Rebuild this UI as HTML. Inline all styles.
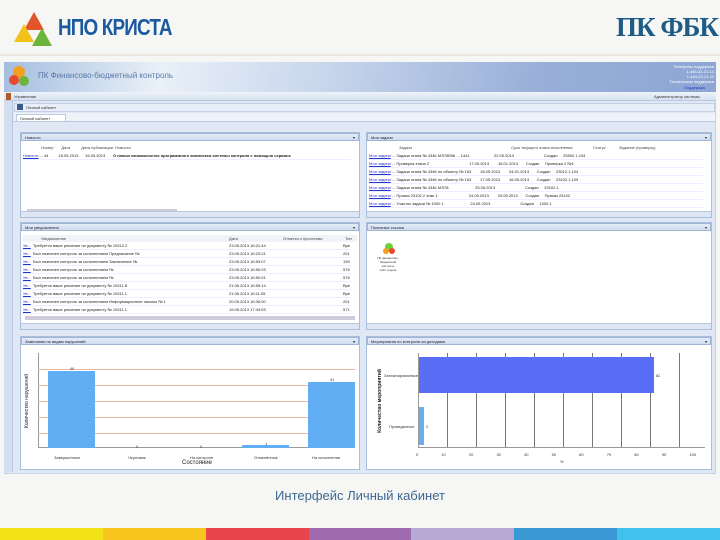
<!DOCTYPE html>
<html><head><meta charset="utf-8"><style>
*{margin:0;padding:0;box-sizing:border-box}
body{width:720px;height:540px;overflow:hidden;background:#f6f6f4;font-family:"Liberation Sans",sans-serif;position:relative}
.a{position:absolute}
.t{font-size:4px;color:#333;white-space:nowrap;overflow:hidden}
.ph{background:linear-gradient(#e4ecf7,#cfdcee);border:1px solid #9fb5d5;height:8px;font-size:4px;color:#223;padding-left:3px;line-height:7px}
.panel{position:absolute;background:#fff;border:1px solid #a9bedd}
.foot{position:absolute;left:0;right:0;bottom:0;height:6px;background:#dde6f2;border-top:1px solid #b7c7de}
.row{position:absolute;left:2px;right:8px;height:8px;font-size:4px;line-height:8px;color:#222;white-space:nowrap;overflow:hidden;border-bottom:1px solid #eef}
.lk{color:#2233cc;text-decoration:underline}
.grid{position:absolute;height:1px;background:#e8b8a0}
</style></head><body>
<!-- logo -->
<svg class="a" style="left:12px;top:10px" width="42" height="40">
<polygon points="22,2 32,20 12,20" fill="#e2552a"/>
<polygon points="12,14 22,32 2,32" fill="#f2c21b"/>
<polygon points="30,18 40,36 20,36" fill="#6cb43c"/>
</svg>
<div class="a" style="left:58px;top:14px;font-size:23px;font-weight:bold;color:#1c5aa0;letter-spacing:-1px;transform:scaleX(0.82);transform-origin:left;font-family:'Liberation Sans',sans-serif">НПО КРИСТА</div>
<div class="a" style="left:616px;top:12px;font-size:27px;font-weight:bold;color:#1e5c86;font-family:'Liberation Serif',serif;letter-spacing:-1px">ПК ФБК</div>
<div class="a" style="left:0;top:54px;width:720px;height:2px;background:#ece8e0"></div>

<!-- app frame -->
<div class="a" style="left:4px;top:62px;width:712px;height:412px;background:#dfe8f4;border:1px solid #c5d3e6"></div>
<div class="a" style="left:4px;top:62px;width:712px;height:30px;background:linear-gradient(100deg,#a4bee0 0%,#e9f0f8 22%,#c8d6ec 45%,#98afd8 75%,#8ea6d4 100%)"></div>
<svg class="a" style="left:8px;top:64px" width="22" height="26"><circle cx="11" cy="8" r="6" fill="#f2a020"/><circle cx="6" cy="16" r="5" fill="#e84a30"/><circle cx="16" cy="17" r="5" fill="#6cb43c"/></svg>
<div class="a" style="left:38px;top:71px;font-size:8px;color:#5b79a8">ПК Финансово-бюджетный контроль</div>
<div class="a t" style="left:664px;top:64px;color:#fff;line-height:5px;width:50px;text-align:right">Телефоны поддержки<br>1-445-22-21-14<br>1-444-22-21-11<br>Техническая поддержка</div>
<div class="a t lk" style="left:684px;top:85px">Поддержка</div>
<div class="a" style="left:4px;top:92px;width:712px;height:9px;background:linear-gradient(#eef3fa,#d6e1f0);border-bottom:1px solid #b9c9df"></div>
<div class="a" style="left:6px;top:93px;width:5px;height:7px;background:#b05a28"></div>
<div class="a t" style="left:14px;top:94px">Управление</div>
<div class="a t" style="left:654px;top:94px">Администратор системы</div>
<div class="a" style="left:4px;top:101px;width:9px;height:371px;background:#d3def0;border-right:1px solid #b9c9df"></div>
<div class="a" style="left:14px;top:103px;width:701px;height:9px;background:#e9eff8;border:1px solid #c3d0e4"></div>
<div class="a" style="left:17px;top:104px;width:6px;height:6px;background:#3a5a8c"></div>
<div class="a t" style="left:26px;top:105px">Личный кабинет</div>
<div class="a" style="left:14px;top:113px;width:701px;height:9px;background:#eef3fa;border-bottom:1px solid #b9c9df"></div>
<div class="a" style="left:16px;top:114px;width:50px;height:8px;background:#fff;border:1px solid #b9c9df"></div>
<div class="a t" style="left:20px;top:116px">Личный кабинет</div>

<!-- Row 1 left -->
<div class="panel" style="left:20px;top:132px;width:340px;height:86px">
<div class="ph">Новости<span style="float:right;padding-right:3px">▾</span></div>
<div class="t a" style="left:8px;top:12px;width:330px;color:#444">&nbsp;&nbsp;&nbsp;&nbsp;&nbsp;&nbsp;&nbsp;&nbsp;&nbsp;&nbsp;&nbsp;Номер &nbsp;&nbsp;&nbsp;&nbsp;&nbsp;&nbsp;Дата &nbsp;&nbsp;&nbsp;&nbsp;&nbsp;&nbsp;&nbsp;&nbsp;&nbsp;Дата публикации &nbsp;Новости</div>
<div class="row" style="top:19px;left:2px"><span class="lk">Новости</span> ... 44 &nbsp;&nbsp;&nbsp;&nbsp;&nbsp;&nbsp;&nbsp;&nbsp;15.05.2013 &nbsp;&nbsp;&nbsp;&nbsp;&nbsp;15.05.2013 &nbsp;&nbsp;&nbsp;&nbsp;&nbsp;&nbsp;<b>О новых возможностях программного комплекса системы контроля с помощью сервиса</b></div>
<div class="a" style="left:6px;top:76px;width:150px;height:3px;background:#ccd"></div>
<div class="foot"></div>
</div>
<!-- Row 1 right -->
<div class="panel" style="left:366px;top:132px;width:346px;height:86px">
<div class="ph">Мои задачи<span style="float:right;padding-right:3px">▾</span></div>
<div class="t a" style="left:32px;top:12px;color:#444">Задача</div>
<div class="t a" style="left:144px;top:12px;color:#444">Срок текущего этапа исполнения</div>
<div class="t a" style="left:226px;top:12px;color:#444">Статус</div>
<div class="t a" style="left:252px;top:12px;color:#444">Задание (проверку)</div>
<div class="row" style="top:19px"><span class="lk">Мои задачи</span> ... Задача этапа № 4346 МЭ78596 ... 1441&nbsp;&nbsp;&nbsp;&nbsp;&nbsp;&nbsp;&nbsp;&nbsp;&nbsp;&nbsp;&nbsp;&nbsp;&nbsp;&nbsp;&nbsp;&nbsp;&nbsp;&nbsp;&nbsp;&nbsp;&nbsp;&nbsp;22.05.2013&nbsp;&nbsp;&nbsp;&nbsp;&nbsp;&nbsp;&nbsp;&nbsp;&nbsp;&nbsp;&nbsp;&nbsp;&nbsp;&nbsp;&nbsp;&nbsp;&nbsp;&nbsp;&nbsp;&nbsp;&nbsp;&nbsp;&nbsp;&nbsp;&nbsp;&nbsp;&nbsp;Создан&nbsp;&nbsp;&nbsp;&nbsp;&nbsp;25592.1.104</div>
<div class="row" style="top:27px"><span class="lk">Мои задачи</span> ... Проверка этапа 2 &nbsp;&nbsp;&nbsp;&nbsp;&nbsp;&nbsp;&nbsp;&nbsp;&nbsp;&nbsp;&nbsp;&nbsp;&nbsp;&nbsp;&nbsp;&nbsp;&nbsp;&nbsp;&nbsp;&nbsp;&nbsp;&nbsp;&nbsp;&nbsp;&nbsp;&nbsp;&nbsp;&nbsp;&nbsp;&nbsp;&nbsp;&nbsp;&nbsp;&nbsp;&nbsp;17.05.2013&nbsp;&nbsp;&nbsp;&nbsp;&nbsp;&nbsp;&nbsp;&nbsp;18.01.2013&nbsp;&nbsp;&nbsp;&nbsp;&nbsp;&nbsp;&nbsp;Создан&nbsp;&nbsp;&nbsp;&nbsp;&nbsp;Проверка 2 №1</div>
<div class="row" style="top:35px"><span class="lk">Мои задачи</span> ... Задача этапа № 4346 по объекту № 163&nbsp;&nbsp;&nbsp;&nbsp;&nbsp;&nbsp;&nbsp;&nbsp;18.05.2013&nbsp;&nbsp;&nbsp;&nbsp;&nbsp;&nbsp;&nbsp;&nbsp;04.01.2013&nbsp;&nbsp;&nbsp;&nbsp;&nbsp;&nbsp;&nbsp;Создан&nbsp;&nbsp;&nbsp;&nbsp;&nbsp;23012.1.104</div>
<div class="row" style="top:43px"><span class="lk">Мои задачи</span> ... Задача этапа № 4346 по объекту № 163&nbsp;&nbsp;&nbsp;&nbsp;&nbsp;&nbsp;&nbsp;&nbsp;17.05.2013&nbsp;&nbsp;&nbsp;&nbsp;&nbsp;&nbsp;&nbsp;&nbsp;16.05.2013&nbsp;&nbsp;&nbsp;&nbsp;&nbsp;&nbsp;&nbsp;Создан&nbsp;&nbsp;&nbsp;&nbsp;&nbsp;23102.1.109</div>
<div class="row" style="top:51px"><span class="lk">Мои задачи</span> ... Задача этапа № 4346 МЭ78 &nbsp;&nbsp;&nbsp;&nbsp;&nbsp;&nbsp;&nbsp;&nbsp;&nbsp;&nbsp;&nbsp;&nbsp;&nbsp;&nbsp;&nbsp;&nbsp;&nbsp;&nbsp;&nbsp;&nbsp;&nbsp;&nbsp;&nbsp;25.05.2013&nbsp;&nbsp;&nbsp;&nbsp;&nbsp;&nbsp;&nbsp;&nbsp;&nbsp;&nbsp;&nbsp;&nbsp;&nbsp;&nbsp;&nbsp;&nbsp;&nbsp;&nbsp;&nbsp;&nbsp;&nbsp;&nbsp;&nbsp;&nbsp;&nbsp;&nbsp;&nbsp;Создан&nbsp;&nbsp;&nbsp;&nbsp;&nbsp;23102.1</div>
<div class="row" style="top:59px"><span class="lk">Мои задачи</span> ... Приказ 23102.2 этап 1 &nbsp;&nbsp;&nbsp;&nbsp;&nbsp;&nbsp;&nbsp;&nbsp;&nbsp;&nbsp;&nbsp;&nbsp;&nbsp;&nbsp;&nbsp;&nbsp;&nbsp;&nbsp;&nbsp;&nbsp;&nbsp;&nbsp;&nbsp;&nbsp;&nbsp;&nbsp;&nbsp;24.05.2013&nbsp;&nbsp;&nbsp;&nbsp;&nbsp;&nbsp;&nbsp;&nbsp;20.05.2013&nbsp;&nbsp;&nbsp;&nbsp;&nbsp;&nbsp;&nbsp;Создан&nbsp;&nbsp;&nbsp;&nbsp;&nbsp;Приказ 23102</div>
<div class="row" style="top:67px"><span class="lk">Мои задачи</span> ... Участок задачи № 1000 1 &nbsp;&nbsp;&nbsp;&nbsp;&nbsp;&nbsp;&nbsp;&nbsp;&nbsp;&nbsp;&nbsp;&nbsp;&nbsp;&nbsp;&nbsp;&nbsp;&nbsp;&nbsp;&nbsp;&nbsp;&nbsp;&nbsp;&nbsp;24.05.2013&nbsp;&nbsp;&nbsp;&nbsp;&nbsp;&nbsp;&nbsp;&nbsp;&nbsp;&nbsp;&nbsp;&nbsp;&nbsp;&nbsp;&nbsp;&nbsp;&nbsp;&nbsp;&nbsp;&nbsp;&nbsp;&nbsp;&nbsp;&nbsp;&nbsp;&nbsp;&nbsp;Создан&nbsp;&nbsp;&nbsp;&nbsp;&nbsp;1000 1</div>
<div class="foot"></div>
</div>

<!-- Row 2 left -->
<div class="panel" style="left:20px;top:222px;width:340px;height:108px">
<div class="ph">Мои уведомления<span style="float:right;padding-right:3px">▾</span></div>
<div class="a" style="left:2px;top:12px;right:2px;height:7px;background:#f0f3f8;font-size:4px;line-height:7px;color:#444;padding-left:18px;white-space:nowrap">Уведомление<span style="position:absolute;left:206px">Дата</span><span style="position:absolute;left:260px">Отметка о прочтении</span><span style="position:absolute;left:322px">Тип</span></div>
<div class="row" style="top:19px"><span class="lk">Ув...</span> &nbsp;Требуется ваше решение по документу № 10312.2<span style="position:absolute;left:206px">23.05.2013 16:21:44</span><span style="position:absolute;left:320px">Вре</span></div>
<div class="row" style="top:27px"><span class="lk">Ув...</span> &nbsp;Был назначен контроль за исполнением Предписание №<span style="position:absolute;left:206px">23.05.2013 16:23:21</span><span style="position:absolute;left:320px">201</span></div>
<div class="row" style="top:35px"><span class="lk">Ув...</span> &nbsp;Был назначен контроль за исполнением Заключение №<span style="position:absolute;left:206px">23.05.2013 16:53:07</span><span style="position:absolute;left:320px">199</span></div>
<div class="row" style="top:43px"><span class="lk">Ув...</span> &nbsp;Был назначен контроль за исполнением №<span style="position:absolute;left:206px">23.05.2013 16:50:03</span><span style="position:absolute;left:320px">576</span></div>
<div class="row" style="top:51px"><span class="lk">Ув...</span> &nbsp;Был назначен контроль за исполнением №<span style="position:absolute;left:206px">23.05.2013 16:50:01</span><span style="position:absolute;left:320px">576</span></div>
<div class="row" style="top:59px"><span class="lk">Ув...</span> &nbsp;Требуется ваше решение по документу № 10311.8<span style="position:absolute;left:206px">21.05.2013 16:59:14</span><span style="position:absolute;left:320px">Вре</span></div>
<div class="row" style="top:67px"><span class="lk">Ув...</span> &nbsp;Требуется ваше решение по документу № 10311.1<span style="position:absolute;left:206px">21.05.2013 16:11:05</span><span style="position:absolute;left:320px">Вре</span></div>
<div class="row" style="top:75px"><span class="lk">Ув...</span> &nbsp;Был назначен контроль за исполнением Информационное письмо № 1<span style="position:absolute;left:206px">20.05.2013 16:30:00</span><span style="position:absolute;left:320px">201</span></div>
<div class="row" style="top:83px"><span class="lk">Ув...</span> &nbsp;Требуется ваше решение по документу № 10311.1<span style="position:absolute;left:206px">19.05.2013 17:43:53</span><span style="position:absolute;left:320px">571</span></div>
<div class="a" style="left:4px;top:93px;width:330px;height:4px;background:#ccd"></div>
<div class="foot"></div>
</div>
<!-- Row 2 right -->
<div class="panel" style="left:366px;top:222px;width:346px;height:108px">
<div class="ph">Полезные ссылки<span style="float:right;padding-right:3px">▾</span></div>
<svg class="a" style="left:15px;top:20px" width="14" height="12"><circle cx="7" cy="4" r="4" fill="#6cd23c"/><circle cx="4" cy="8" r="3" fill="#f2a020"/><circle cx="10" cy="8" r="3" fill="#e84a30"/></svg>
<div class="a t" style="left:8px;top:33px;line-height:4px;text-align:center;width:26px;font-size:3px">ПК финансово-<br>бюджетный<br>контроль<br>сайт отдела</div>
<div class="foot"></div>
</div>

<!-- Row 3 left chart -->
<div class="panel" style="left:20px;top:336px;width:340px;height:134px">
<div class="ph">Замечания по видам нарушений<span style="float:right;padding-right:3px">▾</span></div>
</div>
<div class="a" style="left:38px;top:353px;width:317px;height:95px;border-left:1px solid #999;border-bottom:1px solid #999"></div>
<div class="grid" style="left:38px;top:369px;width:317px"></div>
<div class="grid" style="left:38px;top:385px;width:317px"></div>
<div class="grid" style="left:38px;top:401px;width:317px"></div>
<div class="grid" style="left:38px;top:417px;width:317px"></div>
<div class="grid" style="left:38px;top:433px;width:317px"></div>
<div class="a" style="left:48px;top:371px;width:47px;height:77px;background:#62aef5"></div>
<div class="a" style="left:308px;top:382px;width:47px;height:66px;background:#62aef5"></div>
<div class="a" style="left:242px;top:445px;width:47px;height:3px;background:#62aef5"></div>
<div class="a t" style="left:70px;top:366px">46</div>
<div class="a t" style="left:330px;top:377px">41</div>
<div class="a t" style="left:136px;top:444px">0</div>
<div class="a t" style="left:200px;top:444px">0</div>
<div class="a t" style="left:265px;top:441px">1</div>
<div class="a t" style="left:54px;top:455px">Завершенные</div>
<div class="a t" style="left:128px;top:455px">Черновик</div>
<div class="a t" style="left:190px;top:455px">На контроле</div>
<div class="a t" style="left:254px;top:455px">Отменённые</div>
<div class="a t" style="left:312px;top:455px">На исполнении</div>
<div class="a" style="left:182px;top:460px;font-size:6px;color:#222">Состояние</div>
<div class="a" style="left:0px;top:398px;font-size:5px;color:#222;transform:rotate(-90deg);white-space:nowrap;width:70px;text-align:center;left:-8px">Количество нарушений</div>

<!-- Row 3 right chart -->
<div class="panel" style="left:366px;top:336px;width:346px;height:134px">
<div class="ph">Мероприятия по контролю за доходами<span style="float:right;padding-right:3px">▾</span></div>
</div>
<div class="a" style="left:418px;top:353px;width:287px;height:95px;border-left:1px solid #999;border-bottom:1px solid #999;background:repeating-linear-gradient(90deg,transparent 0 28px,#777 28px 29px)"></div>
<div class="a" style="left:419px;top:357px;width:235px;height:36px;background:#5a6ef5"></div>
<div class="a" style="left:419px;top:407px;width:5px;height:38px;background:#6aaef0"></div>
<div class="a t" style="left:384px;top:373px">Запланированные</div>
<div class="a t" style="left:389px;top:424px">Проведенные</div>
<div class="a t" style="left:656px;top:373px">82</div>
<div class="a t" style="left:426px;top:424px">2</div>
<div class="a t" style="left:416px;top:452px;word-spacing:22px">0 10 20 30 40 50 60 70 80 90 100</div>
<div class="a t" style="left:560px;top:459px">%</div>
<div class="a" style="left:340px;top:398px;font-size:5px;color:#222;font-weight:bold;transform:rotate(-90deg);white-space:nowrap;width:80px;text-align:center">Количество мероприятий</div>

<div class="a" style="left:0;top:488px;width:720px;text-align:center;font-size:13px;color:#3d6894">Интерфейс Личный кабинет</div>

<div class="a" style="left:0;top:528px;width:720px;height:12px;display:flex">
<div style="flex:1;background:#f2e218"></div><div style="flex:1;background:#f8c51e"></div><div style="flex:1;background:#e8464c"></div><div style="flex:1;background:#a06aae"></div><div style="flex:1;background:#b7a9d6"></div><div style="flex:1;background:#3a98d4"></div><div style="flex:1;background:#40c2ec"></div>
</div>
</body></html>
